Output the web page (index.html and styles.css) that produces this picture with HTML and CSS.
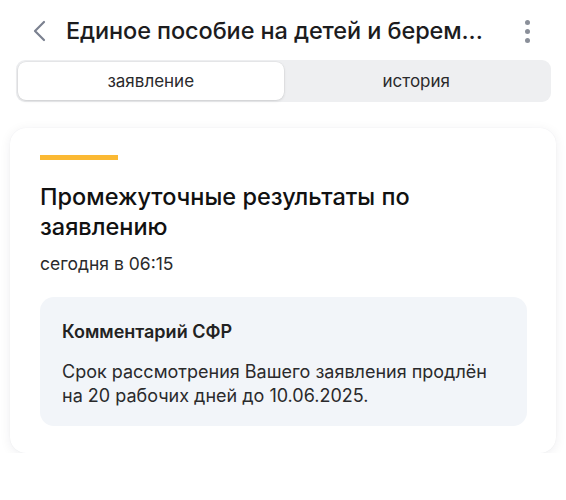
FILE: index.html
```html
<!DOCTYPE html>
<html lang="ru">
<head>
<meta charset="utf-8">
<link rel="stylesheet" href="styles.css">
</head>
<body>
<header class="topbar">
  <svg class="back" width="14" height="22" viewBox="0 0 14 22"><path d="M12 2 L3 11 L12 20" fill="none" stroke="#7b8190" stroke-width="2.2" stroke-linecap="round" stroke-linejoin="round"/></svg>
  <h1 class="title">Единое пособие на детей и берем...</h1>
  <div class="kebab"><span></span><span></span><span></span></div>
</header>
<nav class="segmented">
  <div class="seg seg-active">заявление</div>
  <div class="seg">история</div>
</nav>
<section class="card">
  <div class="accent"></div>
  <h2 class="heading">Промежуточные результаты по заявлению</h2>
  <div class="date">сегодня в 06:15</div>
  <div class="comment">
    <div class="comment-title">Комментарий СФР</div>
    <p class="comment-text">Срок рассмотрения Вашего заявления продлён на 20 рабочих дней до 10.06.2025.</p>
  </div>
</section>
</body>
</html>
```
FILE: styles.css
```css
* { box-sizing: border-box; }
html, body { margin: 0; padding: 0; background: #ffffff; }
body {
  font-family: Inter, "Noto Sans", sans-serif;
  color: #1c1c1e;
  width: 566px;
}
.topbar {
  height: 60px;
  display: flex;
  align-items: center;
  padding: 0 0 0 32px;
}
.back { flex: none; margin-top: 2px; }
.title {
  margin: 0 0 0 20px;
  font-size: 23.5px;
  font-weight: 500;
  letter-spacing: -0.1px;
  color: #1c1c1e;
  white-space: nowrap;
  flex: 1;
}
.kebab {
  width: 6px;
  display: flex;
  flex-direction: column;
  gap: 4px;
  margin-right: 35px;
  margin-top: 2px;
}
.kebab span {
  width: 5px; height: 5px; border-radius: 50%;
  background: #8a8f99;
}
.segmented {
  margin: 0 15px 0 16px;
  height: 42px;
  background: #eeeff1;
  border-radius: 9px;
  padding: 2px;
  display: grid;
  grid-template-columns: 1fr 1fr;
}
.seg {
  display: flex;
  align-items: center;
  justify-content: center;
  font-size: 17px;
  color: #2a2a2c;
}
.seg-active {
  background: #ffffff;
  border-radius: 8px;
  box-shadow: 0 1px 3px rgba(0,0,0,0.12), 0 0 0 0.5px rgba(0,0,0,0.05);
}
.card {
  margin: 26px 10px 0 10px;
  background: #fff;
  border-radius: 16px;
  box-shadow: 0 2px 12px rgba(20,30,60,0.07), 0 0 1px rgba(20,30,60,0.08);
  padding: 27px 29px 27px 30px;
}
.accent {
  width: 78px;
  height: 5px;
  background: #fbb933;
}
.heading {
  margin: 22px 0 0 0;
  font-size: 23.5px;
  font-weight: 500;
  line-height: 30px;
  color: #111;
}
.date {
  margin-top: 11px;
  font-size: 17.5px;
  color: #2a2a2c;
}
.comment {
  margin-top: 23px;
  background: #f2f5f9;
  border-radius: 14px;
  padding: 24px 22px 18px 22px;
}
.comment-title {
  font-size: 18px;
  font-weight: 600;
  color: #222;
}
.comment-text {
  margin: 18px 0 0 0;
  font-size: 18px;
  line-height: 24px;
  color: #2a2a2c;
}
```
